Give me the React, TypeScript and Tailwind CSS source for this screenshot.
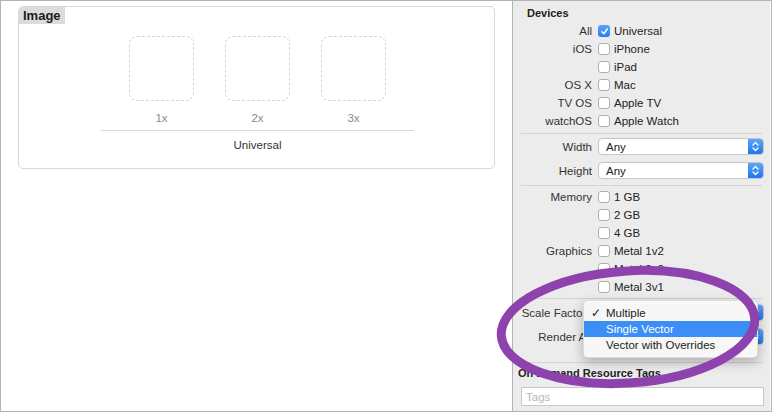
import React from 'react'

const Check = ({ checked }: { checked?: boolean }) =>
  checked ? (
    <div className="ml-[6px] flex h-[12px] w-[12px] shrink-0 items-center justify-center rounded-[3px] bg-gradient-to-b from-[#5ba3f9] to-[#2a7ef2]">
      <svg width="9" height="9" viewBox="0 0 9 9">
        <path d="M1.8 4.8 L3.8 6.8 L7.3 2" fill="none" stroke="white" strokeWidth="1.5" strokeLinecap="round" strokeLinejoin="round" />
      </svg>
    </div>
  ) : (
    <div className="ml-[6px] h-[12px] w-[12px] shrink-0 rounded-[3px] border border-[#b0b0b0] bg-white" />
  )

const Row = ({ label, text, checked }: { label?: string; text: string; checked?: boolean }) => (
  <div className="flex h-[18px] items-center">
    <div className="w-[79px] text-right text-[#333]">{label}</div>
    <Check checked={checked} />
    <span className="ml-[4px]">{text}</span>
  </div>
)

const Popup = ({ label, value, className = '' }: { label: string; value?: string; className?: string }) => (
  <div className={`flex h-[17px] items-center ${className}`}>
    <div className="w-[79px] whitespace-nowrap text-right text-[#333]">{label}</div>
    <div className="ml-[6px] mr-[6px] flex h-[17px] flex-1 items-center overflow-hidden rounded-[4px] border border-[#c6c6c6] bg-white">
      <span className="flex-1 pl-[7px]">{value}</span>
      <div className="flex h-full w-[15px] items-center justify-center bg-gradient-to-b from-[#5ea5fa] to-[#1f74ef]">
        <svg width="9" height="13" viewBox="0 0 9 13">
          <path d="M2 5 L4.5 2.5 L7 5 M2 8 L4.5 10.5 L7 8" fill="none" stroke="white" strokeWidth="1.3" strokeLinecap="round" strokeLinejoin="round" />
        </svg>
      </div>
    </div>
  </div>
)

const Sep = ({ className = '' }: { className?: string }) => <div className={`mx-[8px] h-px bg-[#d3d3d3] ${className}`} />

export default function App() {
  return (
    <div className="relative flex h-[412px] w-[772px] overflow-hidden border border-[#b3b3b3] bg-white font-['Liberation_Sans',Arial,sans-serif] text-[11.5px] leading-[14px] text-[#222]">
      {/* canvas */}
      <div className="w-[511px] shrink-0 bg-white pl-[17px] pt-[5px]">
        <div className="flex h-[163px] w-[477px] flex-col rounded-[5px] border border-[#d9d9d9]">
          <div className="h-[17px] self-start rounded-tl-[4px] bg-[#dcdcdc] px-[4px] text-[13px] font-bold leading-[17px] text-[#1a1a1a]">Image</div>
          <div className="mt-[12px] flex flex-col items-center pl-[2px]">
            <div className="flex gap-[31px]">
              {['1x', '2x', '3x'].map(s => (
                <div key={s} className="flex w-[65px] flex-col items-center">
                  <div className="h-[65px] w-[65px] rounded-[8px] border border-dashed border-[#d6d6d6]" />
                  <div className="mt-[10px] h-[13px] text-[#8a8a8a]">{s}</div>
                </div>
              ))}
            </div>
            <div className="mt-[6px] h-px w-[313px] bg-[#d9d9d9]" />
            <div className="mt-[7px] text-[#333]">Universal</div>
          </div>
        </div>
      </div>

      {/* inspector */}
      <div className="flex w-[258px] shrink-0 flex-col border-l border-[#b3b3b3] bg-[#ececec]">
        <div className="mt-[5px] h-[14px] pl-[14px] text-[11px] font-bold">Devices</div>
        <div className="mt-[2px]">
          <Row label="All" text="Universal" checked />
          <Row label="iOS" text="iPhone" />
          <Row text="iPad" />
          <Row label="OS X" text="Mac" />
          <Row label="TV OS" text="Apple TV" />
          <Row label="watchOS" text="Apple Watch" />
        </div>
        <Sep className="mt-[3px]" />
        <Popup label="Width" value="Any" className="mt-[4px]" />
        <Popup label="Height" value="Any" className="mt-[7px]" />
        <Sep className="mt-[6px]" />
        <div className="mt-[2px]">
          <Row label="Memory" text="1 GB" />
          <Row text="2 GB" />
          <Row text="4 GB" />
          <Row label="Graphics" text="Metal 1v2" />
          <Row text="Metal 2v2" />
          <Row text="Metal 3v1" />
        </div>
        <Sep className="mt-[2px]" />
        <div className="relative mt-[5px]">
          <Popup label="Scale Factors" />
          <div className="absolute left-[70px] top-[-4px] z-10 w-[175px] rounded-[5px] border border-black/10 bg-[#f7f7f7] py-[4px] shadow-[0_4px_12px_rgba(0,0,0,0.28)]">
            <div className="flex h-[16px] items-center">
              <span className="w-[22px] pl-[7px]">✓</span>Multiple
            </div>
            <div className="flex h-[16px] items-center bg-[#3a8ef6] text-white">
              <span className="w-[22px]" />Single Vector
            </div>
            <div className="flex h-[16px] items-center">
              <span className="w-[22px]" />Vector with Overrides
            </div>
          </div>
        </div>
        <Popup label="Render As" className="mt-[7px]" />
        <Sep className="mt-[17px]" />
        <div className="mt-[3px] h-[14px] pl-[5px] text-[11px] font-bold">On Demand Resource Tags</div>
        <div className="ml-[8px] mr-[6px] mt-[7px] flex h-[19px] items-center border border-[#c8c8c8] bg-white pl-[4px] text-[#b8b8b8]">Tags</div>
      </div>

      {/* annotation */}
      <svg className="pointer-events-none absolute left-[-1px] top-[-1px] z-20" width="772" height="412">
        <ellipse cx="628" cy="327" rx="127" ry="56" transform="rotate(-4 628 327)" fill="none" stroke="#8d42ae" strokeWidth="9" />
      </svg>
    </div>
  )
}
